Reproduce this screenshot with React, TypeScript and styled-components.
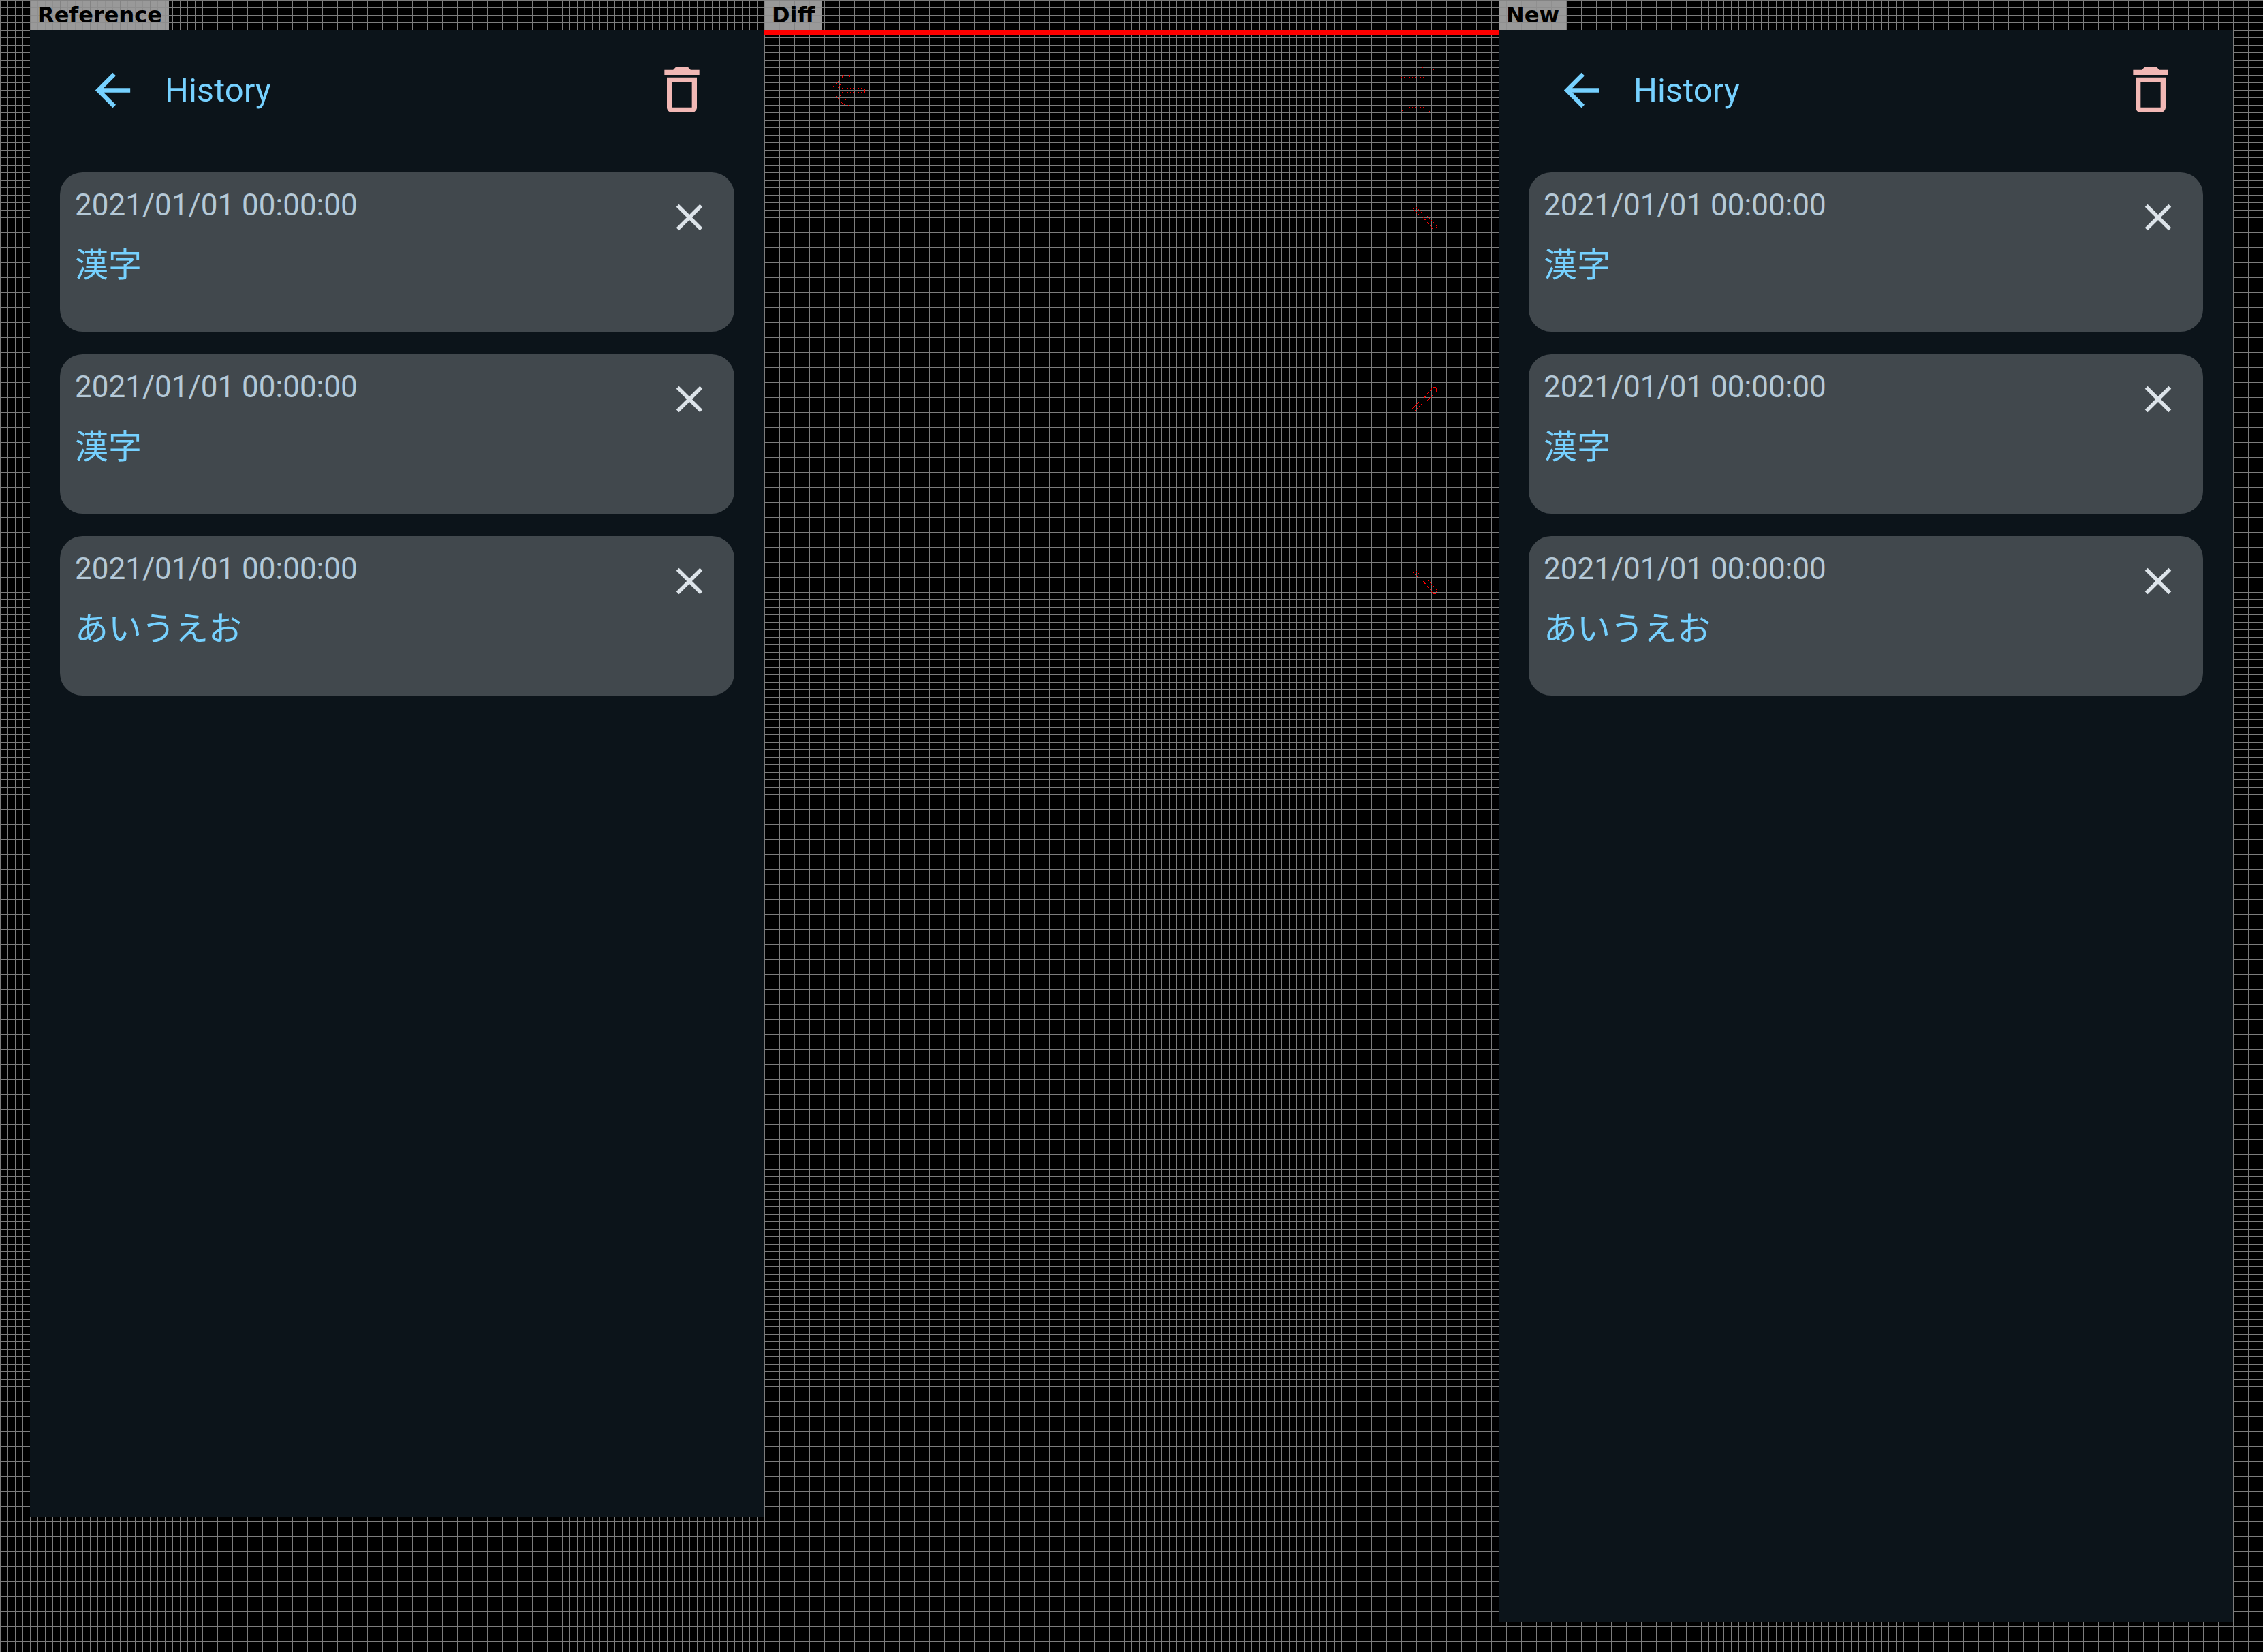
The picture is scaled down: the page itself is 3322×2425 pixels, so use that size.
import React from "react";
import styled, { createGlobalStyle } from "styled-components";

const GlobalStyle = createGlobalStyle`
  * { box-sizing: border-box; }
  body { margin: 0; background: #000; font-family: Roboto, "Noto Sans CJK JP", sans-serif; }
`;

const Board = styled.main`
  min-height: 100vh;
  padding: 0 44px 44px;
  display: grid;
  grid-template-columns: repeat(3, 1fr);
  background-color: #000;
  background-image:
    linear-gradient(#7c7c7c 1px, transparent 1px),
    linear-gradient(90deg, #7c7c7c 1px, transparent 1px);
  background-size: 11px 11px;
`;

const Column = styled.section`
  display: flex;
  flex-direction: column;
  align-items: stretch;
`;

const Label = styled.h2`
  align-self: flex-start;
  margin: 0;
  height: 44px;
  padding: 0 10px 0 11px;
  background-color: #999;
  background-image:
    linear-gradient(#848484 1px, transparent 1px),
    linear-gradient(90deg, #848484 1px, transparent 1px),
    linear-gradient(#8f8f8f 1px, transparent 1px),
    linear-gradient(90deg, #8f8f8f 1px, transparent 1px);
  background-size: 44px 44px, 44px 44px, 11px 11px, 11px 11px;
  color: #000;
  font: bold 32px/44px "DejaVu Sans", sans-serif;
`;

const Screen = styled.div<{ $short?: boolean }>`
  flex: ${(p) => (p.$short ? "0 0 auto" : "1 1 auto")};
  min-height: ${(p) => (p.$short ? "calc(100vh - 242px)" : "0")};
  background: #0c141a;
`;

const TopBar = styled.header`
  display: flex;
  align-items: center;
  height: 176px;
  padding: 0 55px;
`;

const IconButton = styled.button<{ $color: string; $pad: number }>`
  display: flex;
  padding: ${(p) => p.$pad}px;
  border: 0;
  background: none;
  color: ${(p) => p.$color};
`;

const Title = styled.h1`
  flex: 1;
  margin: 0 0 0 10px;
  padding-top: 2px;
  font-size: 49px;
  line-height: 60px;
  font-weight: 400;
  color: #76d1ff;
`;

const List = styled.ul`
  display: grid;
  gap: 33px;
  margin: 0;
  padding: 33px 44px;
  list-style: none;
`;

const Card = styled.li`
  display: flex;
  justify-content: space-between;
  align-items: flex-start;
  height: 234px;
  border-radius: 33px;
  background: #41484d;
`;

const Entry = styled.div`
  padding: 22px;
`;

const Time = styled.time`
  display: block;
  font-size: 44px;
  line-height: 52px;
  color: #b5c9d7;
`;

const Phrase = styled.p`
  margin: 27px 0 0;
  font-size: 49px;
  line-height: 72px;
  color: #76d1ff;
`;

const Icon = ({ d, size }: { d: string; size: number }) => (
  <svg width={size} height={size} viewBox="0 0 24 24" fill="currentColor" aria-hidden="true">
    <path d={d} />
  </svg>
);

const BACK = "M20 11H7.83l5.59-5.59L12 4l-8 8 8 8 1.41-1.41L7.83 13H20v-2z";
const CLOSE = "M19 6.41 17.59 5 12 10.59 6.41 5 5 6.41 10.59 12 5 17.59 6.41 19 12 13.41 17.59 19 19 17.59 13.41 12z";
const TRASH = "M6 19c0 1.1.9 2 2 2h8c1.1 0 2-.9 2-2V7H6v12zM8 9h8v10H8V9zm7.5-5-1-1h-5l-1 1H5v2h14V4z";

const entries = ["漢字", "漢字", "あいうえお"];

const History = ({ short }: { short?: boolean }) => (
  <Screen $short={short}>
    <TopBar>
      <IconButton $color="#76d1ff" $pad={28} aria-label="Back"><Icon d={BACK} size={77} /></IconButton>
      <Title>History</Title>
      <IconButton $color="#f2b8b5" $pad={22} aria-label="Delete all"><Icon d={TRASH} size={88} /></IconButton>
    </TopBar>
    <List>
      {entries.map((text, i) => (
        <Card key={i}>
          <Entry>
            <Time>2021/01/01 00:00:00</Time>
            <Phrase>{text}</Phrase>
          </Entry>
          <IconButton $color="#dce3e9" $pad={33} aria-label="Remove"><Icon d={CLOSE} size={66} /></IconButton>
        </Card>
      ))}
    </List>
  </Screen>
);

const DiffBar = styled.div`
  height: 8px;
  background: #f00;
`;

const DiffMarks = styled.svg`
  display: block;
  width: 100%;
  fill: none;
  stroke: #f00;
  stroke-width: 1;
  shape-rendering: crispEdges;
`;

/* Changed pixels along one diagonal of a close icon, centred on 0,0. */
const STROKE_EDGES = "M-19-16-5-2M-15-19-3-7M-1 0 14 18M3-4 17 10M14 18h4M18 16v-5";

const Diff = () => (
  <>
    <DiffBar />
    <DiffMarks viewBox="0 0 1078 900" aria-hidden="true">
      <path d="M114 77.5H148M114 83.5H148" strokeDasharray="1 3" />
      <path
        d="M101 75 111 65M113 63 117 58M102 86 109 93M113 98 122 105M108 77 112 72M108 84 112 89M118 93 124 99M125 101 121 105M122 56h3M125 58v4M147.5 78v6M96 80.5h1"
        strokeDasharray="3 1"
      />
      <path d="M935 61.5H977M943 105.5H970" strokeDasharray="1 3" />
      <path d="M971.5 72V106" strokeDasharray="2 4" />
      <path d="M931 50.5h1M966 47.5h1M982 50.5h1M936 110.5h2M972 112.5h2M976 111.5h1M978 106.5h1" />
      <g strokeDasharray="2 1">
        <path transform="translate(968 267)" d={STROKE_EDGES} />
        <path transform="translate(968 534) scale(1 -1)" d={STROKE_EDGES} />
        <path transform="translate(968 801)" d={STROKE_EDGES} />
      </g>
    </DiffMarks>
  </>
);

export default function App() {
  return (
    <>
      <GlobalStyle />
      <Board>
        <Column><Label>Reference</Label><History short /></Column>
        <Column><Label>Diff</Label><Diff /></Column>
        <Column><Label>New</Label><History /></Column>
      </Board>
    </>
  );
}
